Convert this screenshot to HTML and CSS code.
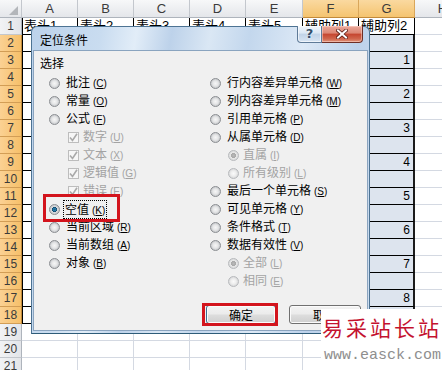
FILE: index.html
```html
<!DOCTYPE html>
<html>
<head>
<meta charset="utf-8">
<link rel="stylesheet" href="styles.css">
</head>
<body>
<div class="sheet">
  <div class="ch corner"><svg width="9" height="9" viewBox="0 0 9 9"><polygon points="9,0 9,9 0,9" fill="#b3b6ba"/></svg></div>
  <div class="ch">A</div><div class="ch">B</div><div class="ch">C</div><div class="ch">D</div><div class="ch">E</div><div class="ch sel">F</div><div class="ch sel">G</div><div class="ch">H</div>

  <div class="rh">1</div><div class="c t a">表头1</div><div class="c t">表头2</div><div class="c t">表头3</div><div class="c t">表头4</div><div class="c t">表头5</div><div class="c t">辅助列1</div><div class="c t">辅助列2</div><div class="c"></div>
  <div class="rh sel">2</div><div class="c t a"></div><div class="c t"></div><div class="c t"></div><div class="c t"></div><div class="c t"></div><div class="c t"></div><div class="c t g"></div><div class="c"></div>
  <div class="rh sel">3</div><div class="c t a"></div><div class="c t"></div><div class="c t"></div><div class="c t"></div><div class="c t"></div><div class="c t"></div><div class="c t g">1</div><div class="c"></div>
  <div class="rh sel">4</div><div class="c t a"></div><div class="c t"></div><div class="c t"></div><div class="c t"></div><div class="c t"></div><div class="c t"></div><div class="c t g"></div><div class="c"></div>
  <div class="rh sel">5</div><div class="c t a"></div><div class="c t"></div><div class="c t"></div><div class="c t"></div><div class="c t"></div><div class="c t"></div><div class="c t g">2</div><div class="c"></div>
  <div class="rh sel">6</div><div class="c t a"></div><div class="c t"></div><div class="c t"></div><div class="c t"></div><div class="c t"></div><div class="c t"></div><div class="c t g"></div><div class="c"></div>
  <div class="rh sel">7</div><div class="c t a"></div><div class="c t"></div><div class="c t"></div><div class="c t"></div><div class="c t"></div><div class="c t"></div><div class="c t g">3</div><div class="c"></div>
  <div class="rh sel">8</div><div class="c t a"></div><div class="c t"></div><div class="c t"></div><div class="c t"></div><div class="c t"></div><div class="c t"></div><div class="c t g"></div><div class="c"></div>
  <div class="rh sel">9</div><div class="c t a"></div><div class="c t"></div><div class="c t"></div><div class="c t"></div><div class="c t"></div><div class="c t"></div><div class="c t g">4</div><div class="c"></div>
  <div class="rh sel">10</div><div class="c t a"></div><div class="c t"></div><div class="c t"></div><div class="c t"></div><div class="c t"></div><div class="c t"></div><div class="c t g"></div><div class="c"></div>
  <div class="rh sel">11</div><div class="c t a"></div><div class="c t"></div><div class="c t"></div><div class="c t"></div><div class="c t"></div><div class="c t"></div><div class="c t g">5</div><div class="c"></div>
  <div class="rh sel">12</div><div class="c t a"></div><div class="c t"></div><div class="c t"></div><div class="c t"></div><div class="c t"></div><div class="c t"></div><div class="c t g"></div><div class="c"></div>
  <div class="rh sel">13</div><div class="c t a"></div><div class="c t"></div><div class="c t"></div><div class="c t"></div><div class="c t"></div><div class="c t"></div><div class="c t g">6</div><div class="c"></div>
  <div class="rh sel">14</div><div class="c t a"></div><div class="c t"></div><div class="c t"></div><div class="c t"></div><div class="c t"></div><div class="c t"></div><div class="c t g"></div><div class="c"></div>
  <div class="rh sel">15</div><div class="c t a"></div><div class="c t"></div><div class="c t"></div><div class="c t"></div><div class="c t"></div><div class="c t"></div><div class="c t g">7</div><div class="c"></div>
  <div class="rh sel">16</div><div class="c t a"></div><div class="c t"></div><div class="c t"></div><div class="c t"></div><div class="c t"></div><div class="c t"></div><div class="c t g"></div><div class="c"></div>
  <div class="rh sel">17</div><div class="c t a"></div><div class="c t"></div><div class="c t"></div><div class="c t"></div><div class="c t"></div><div class="c t"></div><div class="c t g">8</div><div class="c"></div>
  <div class="rh sel">18</div><div class="c t a"></div><div class="c t"></div><div class="c t"></div><div class="c t"></div><div class="c t"></div><div class="c t"></div><div class="c t g"></div><div class="c"></div>
  <div class="rh">19</div><div class="c"></div><div class="c"></div><div class="c"></div><div class="c"></div><div class="c"></div><div class="c"></div><div class="c"></div><div class="c"></div>
  <div class="rh">20</div><div class="c"></div><div class="c"></div><div class="c"></div><div class="c"></div><div class="c"></div><div class="c"></div><div class="c"></div><div class="c"></div>
  <div class="rh">21</div><div class="c"></div><div class="c"></div><div class="c"></div><div class="c"></div><div class="c"></div><div class="c"></div><div class="c"></div><div class="c"></div>
</div>

<div class="dialog">
  <div class="titlebar">
    <span class="title">定位条件</span>
    <div class="capbtns">
      <span class="help">?</span>
      <span class="close"><svg width="12" height="10" viewBox="0 0 12 10"><path d="M2 1.5 L10 8.5 M10 1.5 L2 8.5" stroke="#5a1c14" stroke-width="3.6" stroke-linecap="square"/><path d="M2 1.5 L10 8.5 M10 1.5 L2 8.5" stroke="#ffffff" stroke-width="2" stroke-linecap="square"/></svg></span>
    </div>
  </div>
  <div class="client">
    <div class="grp">选择</div>
    <div class="cols">
      <div class="col left">
        <div class="opt"><span class="radio"></span><span class="lbl">批注<span class="k">(<u>C</u>)</span></span></div>
        <div class="opt"><span class="radio"></span><span class="lbl">常量<span class="k">(<u>O</u>)</span></span></div>
        <div class="opt"><span class="radio"></span><span class="lbl">公式<span class="k">(<u>F</u>)</span></span></div>
        <div class="opt sub dis"><span class="chk"><svg width="9" height="9" viewBox="0 0 9 9"><path d="M1 4.5 L3.5 7.5 L8 0.8" fill="none" stroke="#a9a9a9" stroke-width="1.6"/></svg></span><span class="lbl">数字<span class="k">(<u>U</u>)</span></span></div>
        <div class="opt sub dis"><span class="chk"><svg width="9" height="9" viewBox="0 0 9 9"><path d="M1 4.5 L3.5 7.5 L8 0.8" fill="none" stroke="#a9a9a9" stroke-width="1.6"/></svg></span><span class="lbl">文本<span class="k">(<u>X</u>)</span></span></div>
        <div class="opt sub dis"><span class="chk"><svg width="9" height="9" viewBox="0 0 9 9"><path d="M1 4.5 L3.5 7.5 L8 0.8" fill="none" stroke="#a9a9a9" stroke-width="1.6"/></svg></span><span class="lbl">逻辑值<span class="k">(<u>G</u>)</span></span></div>
        <div class="opt sub dis"><span class="chk"><svg width="9" height="9" viewBox="0 0 9 9"><path d="M1 4.5 L3.5 7.5 L8 0.8" fill="none" stroke="#a9a9a9" stroke-width="1.6"/></svg></span><span class="lbl">错误<span class="k">(<u>E</u>)</span></span></div>
        <div class="opt"><span class="radio on"></span><span class="lbl focus">空值<span class="k">(<u>K</u>)</span></span></div>
        <div class="opt"><span class="radio"></span><span class="lbl">当前区域<span class="k">(<u>R</u>)</span></span></div>
        <div class="opt"><span class="radio"></span><span class="lbl">当前数组<span class="k">(<u>A</u>)</span></span></div>
        <div class="opt"><span class="radio"></span><span class="lbl">对象<span class="k">(<u>B</u>)</span></span></div>
      </div>
      <div class="col right">
        <div class="opt"><span class="radio"></span><span class="lbl">行内容差异单元格<span class="k">(<u>W</u>)</span></span></div>
        <div class="opt"><span class="radio"></span><span class="lbl">列内容差异单元格<span class="k">(<u>M</u>)</span></span></div>
        <div class="opt"><span class="radio"></span><span class="lbl">引用单元格<span class="k">(<u>P</u>)</span></span></div>
        <div class="opt"><span class="radio"></span><span class="lbl">从属单元格<span class="k">(<u>D</u>)</span></span></div>
        <div class="opt rsub dis"><span class="radio on"></span><span class="lbl">直属<span class="k">(<u>I</u>)</span></span></div>
        <div class="opt rsub dis"><span class="radio"></span><span class="lbl">所有级别<span class="k">(<u>L</u>)</span></span></div>
        <div class="opt"><span class="radio"></span><span class="lbl">最后一个单元格<span class="k">(<u>S</u>)</span></span></div>
        <div class="opt"><span class="radio"></span><span class="lbl">可见单元格<span class="k">(<u>Y</u>)</span></span></div>
        <div class="opt"><span class="radio"></span><span class="lbl">条件格式<span class="k">(<u>T</u>)</span></span></div>
        <div class="opt"><span class="radio"></span><span class="lbl">数据有效性<span class="k">(<u>V</u>)</span></span></div>
        <div class="opt rsub dis"><span class="radio on"></span><span class="lbl">全部<span class="k">(<u>L</u>)</span></span></div>
        <div class="opt rsub dis"><span class="radio"></span><span class="lbl">相同<span class="k">(<u>E</u>)</span></span></div>
      </div>
    </div>
    <div class="footer">
      <button class="btn ok">确定</button>
      <button class="btn cancel">取消</button>
    </div>
  </div>
</div>

<div class="mark mark-empty"></div>
<div class="mark mark-ok"></div>

<div class="watermark">
  <div class="wm-cn">易采站长站</div>
  <div class="wm-url">www.easck.com</div>
</div>
</body>
</html>
```

FILE: styles.css
```css
html, body {
  margin: 0;
  padding: 0;
}
body {
  width: 442px;
  height: 370px;
  overflow: hidden;
  position: relative;
  background: #ffffff;
  font-family: "Liberation Sans", "Noto Sans CJK SC", sans-serif;
}

/* ---------- spreadsheet ---------- */
.sheet {
  display: grid;
  grid-template-columns: 22px 56px 56px 56px 56px 57px 56px 56px 56px;
  grid-template-rows: 18px;
  grid-auto-rows: 17px;
  width: 471px;
}
.sheet > div {
  box-sizing: border-box;
  border-right: 1px solid #d4d9e2;
  border-bottom: 1px solid #d4d9e2;
  white-space: nowrap;
  overflow: hidden;
}
.sheet > .ch {
  background: linear-gradient(#f7f8f9, #e4e6ea);
  border-right-color: #c3c7cd;
  border-bottom-color: #aeb4bc;
  color: #3b3b3b;
  font-size: 13px;
  line-height: 17px;
  text-align: center;
}
.sheet > .ch.sel {
  background: linear-gradient(#fad9a0, #f5c470);
  border-right-color: #d9a65a;
  border-bottom-color: #c28a3a;
}
.sheet > .corner {
  display: flex;
  justify-content: flex-end;
  align-items: flex-end;
  padding: 0 3px 2px 0;
}
.sheet > .rh {
  background: linear-gradient(to right, #f2f3f5, #e3e5e9);
  border-right-color: #aeb4bc;
  border-bottom-color: #c3c7cd;
  color: #3b3b3b;
  font-size: 12px;
  line-height: 16px;
  text-align: center;
}
.sheet > .rh.sel {
  background: linear-gradient(to right, #fbd193, #f6c06a);
  border-right-color: #c28a3a;
  border-bottom-color: #d29d55;
}
.sheet > .c {
  font-size: 13px;
  line-height: 16px;
  padding-left: 2px;
  color: #000;
  font-family: "Liberation Sans", "Noto Sans CJK SC", sans-serif;
}
.sheet > .c.t {
  border-right-color: #000;
  border-bottom-color: #000;
}
.sheet > .c.a {
  box-shadow: inset 1px 0 0 #000;
}
.sheet > .c.g {
  background: #dde4ee;
  text-align: right;
  padding-right: 3px;
  border-right: 2px solid #1b1b1b;
  font-size: 12px;
}

/* ---------- dialog ---------- */
.dialog {
  position: absolute;
  left: 31px;
  top: 26px;
  width: 339px;
  height: 308px;
  box-sizing: border-box;
  border: 1px solid #4d7393;
  border-bottom-color: #2e5c78;
  border-radius: 6px 6px 0 0;
  padding: 0 1px 2px 1px;
  display: flex;
  flex-direction: column;
  background: linear-gradient(100deg, #bcd2eb 0%, #c9dcf0 18%, #e2edf8 27%, #bdd2ea 36%, #dae7f4 46%, #c3d7ed 56%, #dde9f6 70%, #bdd2eb 84%, #cddef1 100%);
}
.titlebar {
  height: 23px;
  display: flex;
  align-items: flex-start;
  flex: none;
}
.title {
  margin-top: 3px;
  padding-left: 7px;
  font-size: 12px;
  line-height: 20px;
  color: #000;
  font-family: "Noto Sans CJK SC", sans-serif;
}
.capbtns {
  margin-left: auto;
  margin-right: 5px;
  margin-top: -1px;
  display: flex;
  height: 17px;
}
.help {
  box-sizing: border-box;
  width: 25px;
  height: 17px;
  border: 1px solid #5f7b98;
  border-top: none;
  border-radius: 0 0 0 4px;
  background: linear-gradient(#f1f6fc 0%, #dbe7f4 45%, #c1d3e8 50%, #d8e5f3 100%);
  box-shadow: inset 0 0 0 1px rgba(255,255,255,0.6);
  color: #34506c;
  font-family: "DejaVu Sans", sans-serif;
  font-size: 13px;
  font-weight: bold;
  line-height: 16px;
  text-align: center;
  text-shadow: 0 0 2px #fff;
}
.close {
  box-sizing: border-box;
  width: 41px;
  height: 17px;
  border: 1px solid #6e2f26;
  border-left: none;
  border-top: none;
  border-radius: 0 0 4px 0;
  background: linear-gradient(#eaa99b 0%, #dc8673 45%, #c5452f 50%, #d0664c 80%, #e0947c 100%);
  box-shadow: inset 0 0 0 1px rgba(255,220,210,0.5);
  display: flex;
  justify-content: center;
  align-items: center;
}
.client {
  flex: 1;
  background: #f0f0f0;
  border: 1px solid #8aa4bf;
  display: flex;
  flex-direction: column;
  padding: 3px 6px 6px 6px;
  font-family: "Noto Sans CJK SC", sans-serif;
  font-size: 12px;
  color: #000;
}
.grp {
  line-height: 18px;
  height: 18px;
}
.cols {
  display: flex;
  margin-top: 2px;
}
.col.left {
  width: 161px;
  padding-left: 9px;
}
.opt {
  display: flex;
  align-items: center;
  height: 18px;
  line-height: 18px;
  white-space: nowrap;
}
.opt .radio {
  margin-right: 6px;
}
.opt.sub {
  padding-left: 19px;
}
.opt.rsub {
  padding-left: 18px;
}
.opt.rsub .radio {
  margin-right: 4px;
}
.opt.dis .lbl {
  color: #a3a3a3;
}
.k {
  font-family: "Liberation Sans", sans-serif;
  font-size: 10px;
  margin-left: 3px;
}
.lbl.focus {
  outline: 1px dotted #000;
  outline-offset: 0;
  line-height: 15px;
  padding: 0 1px;
  margin-left: -2px;
}
.radio {
  flex: none;
  width: 11px;
  height: 11px;
  box-sizing: border-box;
  border-radius: 50%;
  border: 1px solid #8b8e92;
  background: radial-gradient(circle at 50% 50%, #f6f6f6 0, #e6e7e8 40%, #c8cacd 72%, #eeeeee 100%);
}
.radio.on {
  background: radial-gradient(circle at 50% 50%, #1e5f86 0, #2a7fae 22%, #0d3f60 38%, #d8dadd 44%, #c8cacd 72%, #eeeeee 100%);
}
.dis .radio {
  border-color: #b7b9bc;
  background: radial-gradient(circle at 50% 50%, #fafafa 0, #eeeeee 40%, #dadbdc 72%, #f2f2f2 100%);
}
.dis .radio.on {
  background: radial-gradient(circle at 50% 50%, #b9b9b9 0, #a9a9a9 36%, #e8e8e8 44%, #dadbdc 72%, #f2f2f2 100%);
}
.chk {
  flex: none;
  width: 11px;
  height: 11px;
  box-sizing: border-box;
  border: 1px solid #bdbdbd;
  background: #f6f6f6;
  margin-right: 4px;
  display: flex;
  align-items: center;
  justify-content: center;
}
.footer {
  margin-top: auto;
  display: flex;
  justify-content: flex-end;
  gap: 13px;
}
.btn {
  box-sizing: border-box;
  height: 19px;
  border: 1px solid #707070;
  border-radius: 3px;
  background: linear-gradient(#f3f3f3 0%, #ebebeb 48%, #dddddd 52%, #cfcfcf 100%);
  box-shadow: inset 0 0 0 1px #fbfbfb;
  font-family: "Noto Sans CJK SC", sans-serif;
  font-size: 12px;
  line-height: 15px;
  padding: 0;
  color: #000;
}
.btn.ok {
  width: 70px;
  border-color: #3d6c8e;
}
.btn.cancel {
  width: 72px;
}

/* ---------- annotations ---------- */
.mark {
  position: absolute;
  box-sizing: border-box;
  border: 3px solid #d3141d;
}
.mark-empty {
  left: 43px;
  top: 194px;
  width: 77px;
  height: 28px;
}
.mark-ok {
  left: 202px;
  top: 303px;
  width: 76px;
  height: 23px;
}

/* ---------- watermark ---------- */
.watermark {
  position: absolute;
  left: 321px;
  top: 309px;
  width: 121px;
  height: 61px;
  background: #ffffff;
  overflow: hidden;
}
.wm-cn {
  margin-top: 5px;
  padding-left: 1px;
  font-family: "Noto Sans CJK SC", serif;
  font-size: 21px;
  line-height: 26px;
  letter-spacing: 3px;
  color: #c4122f;
  white-space: nowrap;
}
.wm-url {
  margin-top: 8px;
  padding-left: 3px;
  font-family: "Liberation Mono", monospace;
  font-size: 15px;
  line-height: 16px;
  color: #8e8e8e;
  white-space: nowrap;
}
```
